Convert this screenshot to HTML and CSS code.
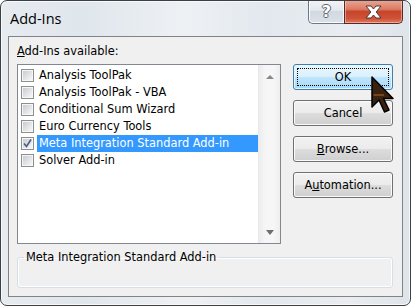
FILE: index.html
```html
<!DOCTYPE html>
<html lang="en">
<head>
    <meta charset="UTF-8">
    <title>Add-Ins</title>
    <link rel="stylesheet" href="styles.css">
</head>
<body>
    <div class="window">
        <div class="titlebar">
            <span class="title">Add-Ins</span>
            <div class="caption-buttons">
                <div class="cap-btn help"><span class="help-glyph">?</span></div>
                <div class="cap-btn close">
                    <svg width="17" height="14" viewBox="0 0 17 14">
                        <polygon points="1,1 6,1 8.5,4 11,1 16,1 11.2,7 16,13 11,13 8.5,10 6,13 1,13 5.8,7" fill="#fff" stroke="#4a3a38" stroke-width="1" stroke-linejoin="round"/>
                    </svg>
                </div>
            </div>
        </div>

        <div class="client">
            <div class="main-row">
                <div class="list-col">
                    <div class="list-label"><u>A</u>dd-Ins available:</div>
                    <div class="listbox">
                        <ul class="items">
                            <li class="item"><span class="chk"></span><span class="item-text">Analysis ToolPak</span></li>
                            <li class="item"><span class="chk"></span><span class="item-text">Analysis ToolPak - VBA</span></li>
                            <li class="item"><span class="chk"></span><span class="item-text">Conditional Sum Wizard</span></li>
                            <li class="item"><span class="chk"></span><span class="item-text">Euro Currency Tools</span></li>
                            <li class="item selected">
                                <span class="chk">
                                    <svg width="9" height="9" viewBox="0 0 9 9"><path d="M1 4.5 L3.5 7.5 L8 0.5" fill="none" stroke="#4c5a86" stroke-width="1.6"/></svg>
                                </span>
                                <span class="item-text">Meta Integration Standard Add-in</span>
                            </li>
                            <li class="item"><span class="chk"></span><span class="item-text">Solver Add-in</span></li>
                        </ul>
                        <div class="scrollbar">
                            <span class="arrow up"></span>
                            <span class="arrow down"></span>
                        </div>
                    </div>
                </div>
                <div class="btn-col">
                    <div class="btn default"><span class="focus">OK</span></div>
                    <div class="btn">Cancel</div>
                    <div class="btn"><span><u>B</u>rowse...</span></div>
                    <div class="btn"><span>A<u>u</u>tomation...</span></div>
                </div>
            </div>
            <fieldset class="group">
                <legend>Meta Integration Standard Add-in</legend>
                <div class="group-body"></div>
            </fieldset>
        </div>

        <svg class="cursor" width="24" height="38" viewBox="0 0 24 38">
            <path d="M1 1 L1 31 L8 24 L13.5 36 L18 34 L12.5 22.5 L22 22.5 Z" fill="#3a2210" stroke="#000" stroke-width="1.5" stroke-linejoin="round"/>
            <path d="M2.5 19 L13 19" stroke="#b06a2c" stroke-width="1.2"/>
        </svg>
    </div>
</body>
</html>
```

FILE: styles.css
```css
body {
    margin: 0;
    font-family: "DejaVu Sans", Verdana, sans-serif;
    font-size: 11.4px;
    color: #000;
}
.window {
    position: relative;
    width: 411px;
    height: 306px;
    box-sizing: border-box;
    border: 1px solid #3c3f44;
    border-radius: 7px;
    padding: 0 7px 8px 7px;
    background: linear-gradient(90deg, #e6ebf0 0%, #dfe6ec 20%, #eef1f4 45%, #e2e8ee 65%, #e9edf1 85%, #dde4ea 100%);
    box-shadow: inset 0 0 0 1px #f7f9fb;
    overflow: hidden;
}
.titlebar {
    display: flex;
    justify-content: space-between;
    align-items: flex-start;
    height: 35px;
}
.title {
    font-family: "Open Sans", sans-serif;
    font-size: 14.5px;
    line-height: 20px;
    padding: 8px 0 0 2px;
    color: #000;
}
.caption-buttons {
    display: flex;
    margin-top: -1px;
}
.cap-btn {
    height: 24px;
    box-sizing: border-box;
    display: flex;
    align-items: center;
    justify-content: center;
}
.help {
    width: 36px;
    border: 1px solid #6d7785;
    border-top: none;
    border-right: none;
    border-radius: 0 0 0 5px;
    background: linear-gradient(#f3f5f7 0%, #e3e8ed 45%, #d2d9e0 50%, #dbe1e7 100%);
    box-shadow: inset 0 0 0 1px #f9fbfc;
}
.help-glyph {
    font-family: "DejaVu Sans", sans-serif;
    font-weight: bold;
    font-size: 16px;
    line-height: 16px;
    color: #fff;
    text-shadow: 1px 0 0 #5c6168, -1px 0 0 #5c6168, 0 1px 0 #5c6168, 0 -1px 0 #5c6168;
}
.close {
    width: 59px;
    border: 1px solid #5a2a22;
    border-top: none;
    border-radius: 0 0 5px 0;
    background: linear-gradient(#eba696 0%, #dc7b64 40%, #c7452c 50%, #ce5236 80%, #e07a5e 100%);
    box-shadow: inset 0 0 0 1px rgba(255, 220, 210, 0.5);
}
.client {
    border: 1px solid #838383;
    background: #f0f0f0;
    padding: 7px 9px 8px 8px;
}
.main-row {
    display: flex;
    gap: 12px;
}
.list-col {
    width: 264px;
}
.list-label {
    line-height: 15px;
    margin-bottom: 5px;
}
.listbox {
    display: flex;
    height: 180px;
    box-sizing: border-box;
    border: 1px solid #828790;
    background: #fff;
}
.items {
    flex: 1;
    list-style: none;
    margin: 0;
    padding: 2px 0 0 3px;
}
.item {
    display: flex;
    align-items: center;
    height: 17px;
}
.chk {
    width: 13px;
    height: 13px;
    box-sizing: border-box;
    border: 1px solid #8e8f8f;
    padding: 1px;
    background: linear-gradient(135deg, #c8ccd1, #f7f7f7) content-box, #f6f6f6;
    display: flex;
    align-items: center;
    justify-content: center;
}
.chk svg {
    display: block;
}
.item-text {
    flex: 1;
    margin-left: 3px;
    padding-left: 2px;
    line-height: 17px;
}
.selected .item-text {
    background: #3399ff;
    color: #fff;
}
.scrollbar {
    width: 21px;
    border-left: 1px solid #e8e8e8;
    background: linear-gradient(90deg, #ececec, #f6f6f6 30%, #f6f6f6 70%, #eeeeee);
    display: flex;
    flex-direction: column;
    justify-content: space-between;
    align-items: center;
    padding: 10px 0 8px 0;
}
.arrow {
    width: 0;
    height: 0;
    border-left: 4.5px solid transparent;
    border-right: 4.5px solid transparent;
}
.arrow.up {
    border-bottom: 4px solid #8a8a8a;
}
.arrow.down {
    border-top: 5px solid #6e6e6e;
}
.btn-col {
    width: 100px;
    padding-top: 20px;
    display: flex;
    flex-direction: column;
    gap: 10px;
}
.btn {
    height: 26px;
    box-sizing: border-box;
    border: 1px solid #707070;
    border-radius: 3px;
    background: linear-gradient(#f2f2f2 0%, #ebebeb 50%, #dddddd 51%, #cfcfcf 100%);
    box-shadow: inset 0 0 0 1px #fbfbfb;
    display: flex;
    align-items: center;
    justify-content: center;
    line-height: 15px;
}
.btn.default {
    border-color: #3c7fb1;
    background: linear-gradient(#eaf6fd 0%, #d9f0fc 50%, #bee6fd 51%, #a7d9f5 100%);
    box-shadow: inset 0 0 0 1px #e8f4fc;
    padding: 3px;
}
.focus {
    flex: 1;
    align-self: stretch;
    border: 1px dotted #000;
    display: flex;
    align-items: center;
    justify-content: center;
}
.group {
    margin: 6px 0 0 0;
    padding: 0;
    min-inline-size: 0;
    border: 1px solid #d5dfe5;
    border-radius: 3px;
    box-shadow: inset 0 0 0 1px #ffffff;
}
.group legend {
    margin-left: 6px;
    padding: 0 2px;
    line-height: 14px;
}
.group-body {
    height: 23px;
}
.cursor {
    position: absolute;
    left: 370px;
    top: 75px;
}
```
